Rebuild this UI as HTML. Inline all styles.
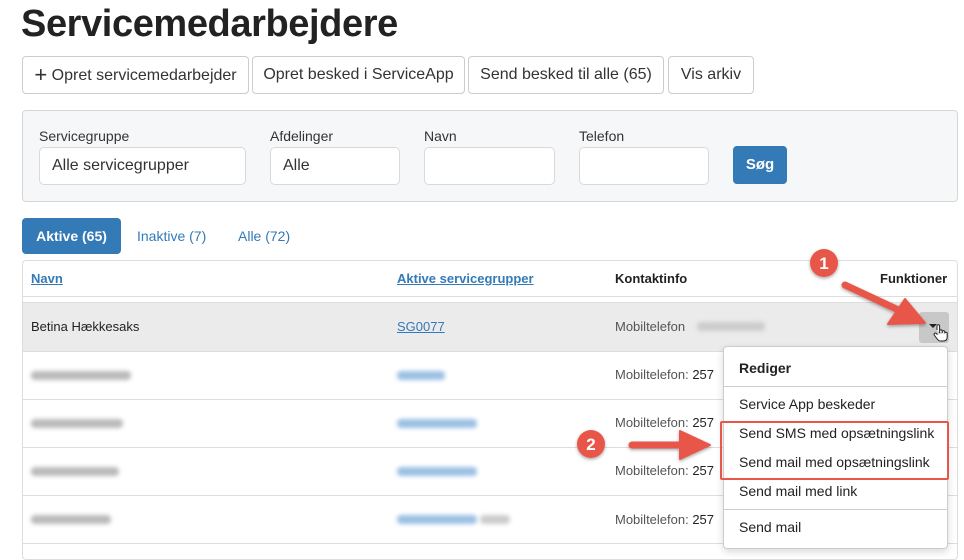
<!DOCTYPE html>
<html><head><meta charset="utf-8"><style>
*{box-sizing:border-box;margin:0;padding:0}
body{width:964px;height:556px;background:#fff;font-family:"Liberation Sans",Arial,sans-serif;color:#222;position:relative;overflow:hidden}
.a{position:absolute}
h1{position:absolute;left:21px;top:3px;font-size:38px;font-weight:bold;color:#222;letter-spacing:-0.4px}
.btn{position:absolute;top:56px;height:38px;border:1px solid #ccc;border-radius:4px;background:#fff;font-size:16px;line-height:36px;text-align:center;color:#333}
.panel{position:absolute;left:22px;top:110px;width:936px;height:92px;background:#f6f7f8;border:1px solid #d6d6d6;border-radius:4px}
.lbl{position:absolute;top:128px;font-size:14px;color:#333}
.inp{position:absolute;top:147px;height:38px;background:#fff;border:1px solid #d9d9d9;border-radius:5px;font-size:16px;line-height:36px;padding-left:12px;color:#333}
.tab{position:absolute;top:218px;height:36px;line-height:36px;font-size:14px;color:#337ab7}
.blur{position:absolute;height:9px;border-radius:4px;filter:blur(2px)}
.line{position:absolute;height:1px;background:#ddd}
.mi{position:absolute;left:739px;font-size:14px;color:#222}
</style></head><body>
<h1>Servicemedarbejdere</h1>
<div class="btn" style="left:22px;width:227px"><span style="font-size:22px;vertical-align:-2px">+</span> Opret servicemedarbejder</div>
<div class="btn" style="left:252px;width:213px">Opret besked i ServiceApp</div>
<div class="btn" style="left:468px;width:196px">Send besked til alle (65)</div>
<div class="btn" style="left:668px;width:86px">Vis arkiv</div>

<div class="panel"></div>
<div class="lbl" style="left:39px">Servicegruppe</div>
<div class="lbl" style="left:270px">Afdelinger</div>
<div class="lbl" style="left:424px">Navn</div>
<div class="lbl" style="left:579px">Telefon</div>
<div class="inp" style="left:39px;width:207px">Alle servicegrupper</div>
<div class="inp" style="left:270px;width:130px">Alle</div>
<div class="inp" style="left:424px;width:131px"></div>
<div class="inp" style="left:579px;width:130px"></div>
<div class="a" style="left:733px;top:146px;width:54px;height:38px;background:#337ab7;border-radius:4px;color:#fff;font-weight:bold;font-size:15px;line-height:38px;text-align:center">Søg</div>

<div class="tab" style="left:22px;width:99px;background:#337ab7;color:#fff;border-radius:4px;text-align:center;font-weight:bold">Aktive (65)</div>
<div class="tab" style="left:137px">Inaktive (7)</div>
<div class="tab" style="left:238px">Alle (72)</div>

<div class="a" style="left:22px;top:260px;width:936px;height:300px;border:1px solid #ddd;border-radius:4px"></div>
<div class="a" style="left:31px;top:271px;font-size:13px;font-weight:bold;color:#337ab7;text-decoration:underline">Navn</div>
<div class="a" style="left:397px;top:271px;font-size:13px;font-weight:bold;color:#337ab7;text-decoration:underline">Aktive servicegrupper</div>
<div class="a" style="left:615px;top:271px;font-size:13px;font-weight:bold">Kontaktinfo</div>
<div class="a" style="left:880px;top:271px;font-size:13px;font-weight:bold">Funktioner</div>
<div class="line" style="left:23px;top:296px;width:934px"></div>
<div class="line" style="left:23px;top:302px;width:934px"></div>
<div class="a" style="left:23px;top:303px;width:934px;height:48px;background:#ebebeb"></div>
<div class="a" style="left:31px;top:319px;font-size:13px">Betina Hækkesaks</div>
<div class="a" style="left:397px;top:319px;font-size:13px;color:#337ab7;text-decoration:underline">SG0077</div>
<div class="a" style="left:615px;top:319px;font-size:13px;color:#555">Mobiltelefon</div>
<div class="blur" style="left:697px;top:322px;width:68px;background:#ccc"></div>
<div class="a" style="left:919px;top:312px;width:30px;height:31px;background:#c8c8c8;border-radius:3px"></div>
<div class="a" style="left:929px;top:324px;width:0;height:0;border-left:4px solid transparent;border-right:4px solid transparent;border-top:4px solid #222"></div>

<div class="line" style="left:23px;top:351px;width:934px"></div>
<div class="line" style="left:23px;top:399px;width:934px"></div>
<div class="line" style="left:23px;top:447px;width:934px"></div>
<div class="line" style="left:23px;top:495px;width:934px"></div>
<div class="line" style="left:23px;top:543px;width:934px"></div>

<div class="blur" style="left:31px;top:371px;width:100px;background:#bbb"></div>
<div class="blur" style="left:31px;top:419px;width:92px;background:#bbb"></div>
<div class="blur" style="left:31px;top:467px;width:88px;background:#bbb"></div>
<div class="blur" style="left:31px;top:515px;width:80px;background:#bbb"></div>
<div class="blur" style="left:397px;top:371px;width:48px;background:#9cc0e4"></div>
<div class="blur" style="left:397px;top:419px;width:80px;background:#9cc0e4"></div>
<div class="blur" style="left:397px;top:467px;width:80px;background:#9cc0e4"></div>
<div class="blur" style="left:397px;top:515px;width:80px;background:#9cc0e4"></div>
<div class="blur" style="left:480px;top:515px;width:30px;background:#ccc"></div>
<div class="a" style="left:615px;top:367px;font-size:13px;color:#555">Mobiltelefon: <span style="color:#222">257</span></div>
<div class="a" style="left:615px;top:415px;font-size:13px;color:#555">Mobiltelefon: <span style="color:#222">257</span></div>
<div class="a" style="left:615px;top:463px;font-size:13px;color:#555">Mobiltelefon: <span style="color:#222">257</span></div>
<div class="a" style="left:615px;top:512px;font-size:13px;color:#555">Mobiltelefon: <span style="color:#222">257</span></div>

<div class="a" style="left:723px;top:346px;width:225px;height:203px;background:#fff;border:1px solid #ccc;border-radius:4px;box-shadow:0 3px 8px rgba(0,0,0,.15)"></div>
<div class="mi" style="top:360px;font-weight:bold">Rediger</div>
<div class="line" style="left:724px;top:386px;width:223px;background:#ccc"></div>
<div class="mi" style="top:396px">Service App beskeder</div>
<div class="mi" style="top:425px">Send SMS med opsætningslink</div>
<div class="mi" style="top:454px">Send mail med opsætningslink</div>
<div class="mi" style="top:483px">Send mail med link</div>
<div class="line" style="left:724px;top:509px;width:223px;background:#ccc"></div>
<div class="mi" style="top:519px">Send mail</div>
<div class="a" style="left:720px;top:421px;width:229px;height:59px;border:2px solid #e8574a;border-radius:2px"></div>

<svg class="a" style="left:0;top:0" width="964" height="556">
<defs><filter id="s"><feDropShadow dx="0" dy="1.5" stdDeviation="1.5" flood-opacity=".35"/></filter></defs>
<g filter="url(#s)" fill="#e8574a" stroke="#e8574a">
<line x1="845" y1="285" x2="905" y2="313" stroke-width="7" stroke-linecap="round"/>
<polygon points="925,323 888,324 905,299" stroke-width="2" stroke-linejoin="round"/>
<line x1="632" y1="445" x2="690" y2="445" stroke-width="7" stroke-linecap="round"/>
<polygon points="710,445 680,431 680,459" stroke-width="2" stroke-linejoin="round"/>
<circle cx="824" cy="263" r="14" stroke="none"/>
<circle cx="591" cy="444" r="14" stroke="none"/>
</g>
<text x="824" y="269" font-family="Liberation Sans" font-weight="bold" font-size="17" fill="#fff" text-anchor="middle">1</text>
<text x="591" y="450" font-family="Liberation Sans" font-weight="bold" font-size="17" fill="#fff" text-anchor="middle">2</text>
<path d="M937 330 v-4 a1.3 1.3 0 0 1 2.6 0 v7 M939.6 331 a1.3 1.3 0 0 1 2.6 0 v2 M942.2 332 a1.3 1.3 0 0 1 2.6 0 v1.5 M944.8 333 a1.3 1.3 0 0 1 2.4 0 v4 q0 4 -4 4 h-2.5 q-2 0 -3.5 -2 l-3 -4 a1.3 1.3 0 0 1 2 -1.6 l1.2 1.2" fill="#fff" stroke="#222" stroke-width="1"/>
</svg>
</body></html>
